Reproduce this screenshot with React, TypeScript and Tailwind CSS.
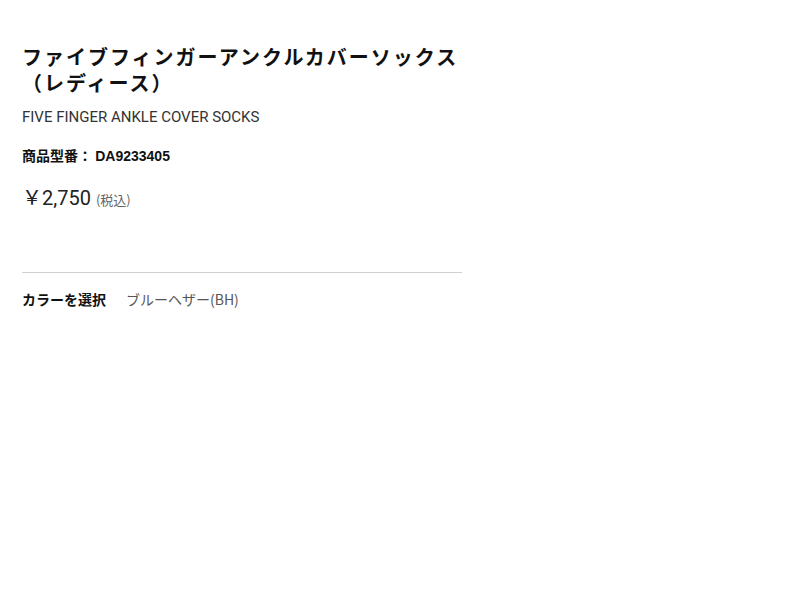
export default function App() {
  const jp = { fontFamily: '"Noto Sans CJK JP", "Noto Sans", sans-serif' };
  const latin = { fontFamily: 'Roboto, "Noto Sans CJK JP", sans-serif' };

  return (
    <div className="min-h-screen bg-white text-[#111]" style={jp}>
      <div className="w-[440px] ml-[22px] pt-[44px]">
        <h1 className="text-[20px] font-bold leading-[26px] tracking-[0.1em]">
          ファイブフィンガーアンクルカバーソックス
          <br />
          （レディース）
        </h1>
        <p className="mt-[12px] text-[15px] leading-[18px] text-[#333]" style={latin}>
          FIVE FINGER ANKLE COVER SOCKS
        </p>
        <p className="mt-[20px] text-[14px] font-bold leading-[18px]">
          商品型番：&nbsp;<span style={{ fontFamily: '"Liberation Sans", Arial, sans-serif' }}>DA9233405</span>
        </p>
        <p className="mt-[20px] leading-[26px] text-[#222]">
          <span className="text-[20px]" style={latin}>￥2,750</span>
          <span className="ml-[5px] text-[13px] text-[#666]">(税込)</span>
        </p>
        <div className="mt-[59px] border-t border-[#d0d0d0]" />
        <div className="mt-[17px] flex items-center text-[14px] leading-[18px]">
          <span className="font-bold w-[104px]">カラーを選択</span>
          <span className="text-[#555]">ブルーヘザー(BH)</span>
        </div>
      </div>
    </div>
  );
}
